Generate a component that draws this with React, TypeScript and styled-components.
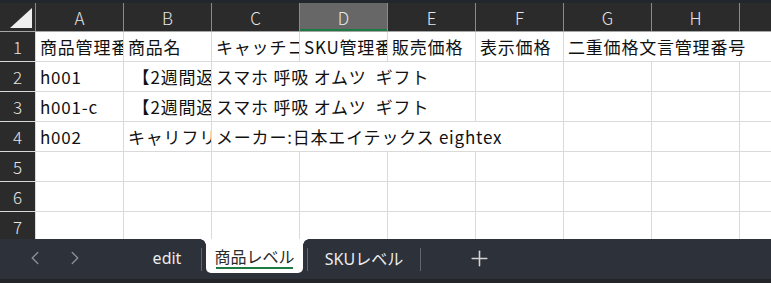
import React from 'react';
import styled, { createGlobalStyle } from 'styled-components';
import { ChevronLeft, ChevronRight, Plus } from 'lucide-react';

const GlobalStyle = createGlobalStyle`
  html, body { margin: 0; padding: 0; background: #ffffff; }
  * { box-sizing: border-box; }
`;

const FONT = `"Noto Sans CJK JP", "Noto Sans", sans-serif`;
const TAB_FONT = `"Noto Sans", "Noto Sans CJK JP", sans-serif`;
const COL_W = 87;
const ROW_H = 29;
const HEAD_W = 35;

const Page = styled.div`
  width: 771px;
  height: 283px;
  display: flex;
  flex-direction: column;
  overflow: hidden;
  font-family: ${FONT};
  background: #ffffff;
`;

const TopStrip = styled.div`
  height: 3px;
  flex: none;
  background: #22262d;
`;

const Sheet = styled.div`
  flex: 1;
  min-height: 0;
  overflow: hidden;
  display: flex;
  flex-direction: column;
`;

const HeaderRow = styled.div`
  display: grid;
  grid-template-columns: ${HEAD_W}px repeat(9, ${COL_W}px);
  column-gap: 1px;
  height: ${ROW_H}px;
  background: #8a8a8a;
  border-bottom: 1px solid #a6a6a6;
  flex: none;
`;

const Corner = styled.div`
  background: #2b2b2b;
  display: flex;
  align-items: flex-end;
  justify-content: flex-end;
  padding: 0 3px 3px 0;
`;

const ColHead = styled.div<{ $selected?: boolean }>`
  background: ${(p) => (p.$selected ? '#676767' : '#2b2b2b')};
  color: #e6e6e6;
  font-size: 17px;
  font-weight: 300;
  display: flex;
  align-items: center;
  justify-content: center;
  box-shadow: ${(p) => (p.$selected ? 'inset 0 -2px 0 #1d7a43' : 'none')};
`;

const Body = styled.div`
  display: grid;
  grid-template-columns: ${HEAD_W}px repeat(9, ${COL_W}px);
  grid-auto-rows: ${ROW_H}px;
  gap: 1px;
  background: #dadada;
  padding-bottom: 1px;
`;

const RowHead = styled.div`
  background: #2b2b2b;
  color: #e6e6e6;
  font-size: 17px;
  font-weight: 300;
  display: flex;
  align-items: center;
  justify-content: center;
`;

const Cell = styled.div<{ $span?: number }>`
  grid-column: span ${(p) => p.$span ?? 1};
  background: #ffffff;
  color: #111111;
  font-size: 17px;
  letter-spacing: 0.8px;
  white-space: pre;
  overflow: hidden;
  padding: 0 0 0 4px;
  display: flex;
  align-items: center;
`;

const TabBar = styled.div`
  height: 40px;
  flex: none;
  background: #2d3139;
  display: flex;
  align-items: flex-start;
  padding-left: 15px;
`;

const BottomStrip = styled.div`
  height: 4px;
  flex: none;
  background: #232529;
`;

const NavButton = styled.div`
  width: 40px;
  height: 38px;
  display: flex;
  align-items: center;
  justify-content: center;
  color: #8b8f96;
`;

const Tabs = styled.div`
  display: flex;
  align-items: flex-start;
  margin-left: 38px;
  height: 100%;
`;

const Tab = styled.div<{ $active?: boolean; $width: number }>`
  position: relative;
  width: ${(p) => p.$width}px;
  height: ${(p) => (p.$active ? '34px' : '38px')};
  display: flex;
  align-items: center;
  justify-content: center;
  font-family: ${TAB_FONT};
  font-size: 16px;
  color: ${(p) => (p.$active ? '#2b2b2b' : '#ececec')};
  background: ${(p) => (p.$active ? '#ffffff' : 'transparent')};
  border-radius: ${(p) => (p.$active ? '0 0 5px 5px' : '0')};
  margin: ${(p) => (p.$active ? '0 4px' : '0')};
  ${(p) =>
    p.$active
      ? `
    &::before, &::after {
      content: '';
      position: absolute;
      top: 0;
      width: 6px;
      height: 6px;
    }
    &::before {
      left: -6px;
      background: radial-gradient(circle at 0 100%, #2d3139 5.5px, #ffffff 6px);
    }
    &::after {
      right: -6px;
      background: radial-gradient(circle at 100% 100%, #2d3139 5.5px, #ffffff 6px);
    }
  `
      : ''}
`;

const Underline = styled.div`
  position: absolute;
  left: 10px;
  right: 10px;
  bottom: 4px;
  height: 2px;
  background: #1d7a43;
`;

const Separator = styled.div`
  width: 1px;
  height: 23px;
  margin-top: 9px;
  background: #61656c;
`;

const AddButton = styled.div`
  width: 30px;
  height: 38px;
  margin-left: 43px;
  display: flex;
  align-items: center;
  justify-content: center;
  color: #d4d4d4;
`;

type CellData = { c: number; t: string; span?: number };

const rows: CellData[][] = [
  [
    { c: 0, t: '商品管理番号' },
    { c: 1, t: '商品名' },
    { c: 2, t: 'キャッチコピー' },
    { c: 3, t: 'SKU管理番号' },
    { c: 4, t: '販売価格' },
    { c: 5, t: '表示価格' },
    { c: 6, t: '二重価格文言管理番号', span: 3 },
  ],
  [
    { c: 0, t: 'h001' },
    { c: 1, t: ' 【2週間返品OK】' },
    { c: 2, t: 'スマホ 呼吸 オムツ  ギフト', span: 3 },
  ],
  [
    { c: 0, t: 'h001-c' },
    { c: 1, t: ' 【2週間返品OK】' },
    { c: 2, t: 'スマホ 呼吸 オムツ  ギフト', span: 3 },
  ],
  [
    { c: 0, t: 'h002' },
    { c: 1, t: 'キャリフリー' },
    { c: 2, t: 'メーカー:日本エイテックス eightex', span: 4 },
  ],
  [],
  [],
  [],
];

const COLS = ['A', 'B', 'C', 'D', 'E', 'F', 'G', 'H', 'I'];

function renderRow(data: CellData[], r: number) {
  const out: React.ReactNode[] = [<RowHead key={`h${r}`}>{r + 1}</RowHead>];
  let c = 0;
  while (c < COLS.length) {
    const d = data.find((x) => x.c === c);
    if (d) {
      out.push(
        <Cell key={`${r}-${c}`} $span={d.span}>
          {d.t}
        </Cell>
      );
      c += d.span ?? 1;
    } else {
      out.push(<Cell key={`${r}-${c}`} />);
      c += 1;
    }
  }
  return out;
}

export default function App() {
  return (
    <>
      <GlobalStyle />
      <Page>
        <TopStrip />
        <Sheet>
          <HeaderRow>
            <Corner>
              <svg width="22" height="20" viewBox="0 0 22 20">
                <polygon points="22,0 22,20 0,20" fill="#efefef" />
              </svg>
            </Corner>
            {COLS.map((l) => (
              <ColHead key={l} $selected={l === 'D'}>
                {l}
              </ColHead>
            ))}
          </HeaderRow>
          <Body>{rows.map((r, i) => renderRow(r, i))}</Body>
        </Sheet>
        <TabBar>
          <NavButton>
            <ChevronLeft size={22} strokeWidth={1.5} />
          </NavButton>
          <NavButton>
            <ChevronRight size={22} strokeWidth={1.5} />
          </NavButton>
          <Tabs>
            <Tab $width={68}>edit</Tab>
            <Separator />
            <Tab $active $width={97}>
              商品レベル
              <Underline />
            </Tab>
            <Separator />
            <Tab $width={112}>SKUレベル</Tab>
            <Separator />
          </Tabs>
          <AddButton>
            <Plus size={25} strokeWidth={1.5} />
          </AddButton>
        </TabBar>
        <BottomStrip />
      </Page>
    </>
  );
}
